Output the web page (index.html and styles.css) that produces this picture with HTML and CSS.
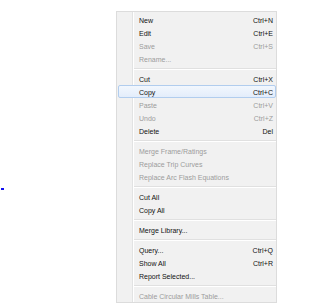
FILE: index.html
```html
<!DOCTYPE html>
<html>
<head>
<meta charset="utf-8">
<link rel="stylesheet" href="styles.css">
</head>
<body>
<span class="dot"></span>
<div class="menu">
  <div class="item"><span class="label">New</span><span class="key">Ctrl+N</span></div>
  <div class="item"><span class="label">Edit</span><span class="key">Ctrl+E</span></div>
  <div class="item off"><span class="label">Save</span><span class="key">Ctrl+S</span></div>
  <div class="item off"><span class="label">Rename...</span><span class="key"></span></div>
  <div class="sep"></div>
  <div class="item"><span class="label">Cut</span><span class="key">Ctrl+X</span></div>
  <div class="item hot"><span class="label">Copy</span><span class="key">Ctrl+C</span></div>
  <div class="item off"><span class="label">Paste</span><span class="key">Ctrl+V</span></div>
  <div class="item off"><span class="label">Undo</span><span class="key">Ctrl+Z</span></div>
  <div class="item"><span class="label">Delete</span><span class="key">Del</span></div>
  <div class="sep"></div>
  <div class="item off"><span class="label">Merge Frame/Ratings</span><span class="key"></span></div>
  <div class="item off"><span class="label">Replace Trip Curves</span><span class="key"></span></div>
  <div class="item off"><span class="label">Replace Arc Flash Equations</span><span class="key"></span></div>
  <div class="sep"></div>
  <div class="item"><span class="label">Cut All</span><span class="key"></span></div>
  <div class="item"><span class="label">Copy All</span><span class="key"></span></div>
  <div class="sep"></div>
  <div class="item"><span class="label">Merge Library...</span><span class="key"></span></div>
  <div class="sep"></div>
  <div class="item"><span class="label">Query...</span><span class="key">Ctrl+Q</span></div>
  <div class="item"><span class="label">Show All</span><span class="key">Ctrl+R</span></div>
  <div class="item"><span class="label">Report Selected...</span><span class="key"></span></div>
  <div class="sep"></div>
  <div class="item off"><span class="label">Cable Circular Mills Table...</span><span class="key"></span></div>
</div>
</body>
</html>
```

FILE: styles.css
```css
html, body {
  margin: 0;
  padding: 0;
  background: #ffffff;
}
body {
  width: 323px;
  height: 308px;
  overflow: hidden;
  font-family: "Liberation Sans", Arial, sans-serif;
  font-size: 7px;
  color: #111111;
}
.dot {
  position: absolute;
  left: 1px;
  top: 188px;
  width: 3px;
  height: 2px;
  background: #1010f0;
}
.menu {
  margin: 11px 0 0 116px;
  width: 159px;
  padding: 1px 0 0 0;
  border: 1px solid #dcdcdc;
  background: linear-gradient(to right, #f1f1f1 15px, #e2e3e3 15px, #e2e3e3 16px, #ffffff 16px, #ffffff 17px, #f1f1f1 17px);
  display: flex;
  flex-direction: column;
}
.item {
  height: 13px;
  display: flex;
  align-items: center;
  justify-content: space-between;
  padding: 1px 2px 0 20px;
  box-sizing: border-box;
  border: 1px solid transparent;
  margin: 0 0 0 1px;
}
.item.off {
  color: #9c9c9c;
}
.item.hot {
  border: 1px solid #b1cdee;
  border-radius: 2px;
  background: linear-gradient(to bottom, #f2f7fd, #e3edfb);
}
.key {
  text-align: right;
}
.sep {
  height: 1px;
  margin: 3px 0 2px 17px;
  background: #e0e0e0;
  border-bottom: 1px solid #ffffff;
}
```
